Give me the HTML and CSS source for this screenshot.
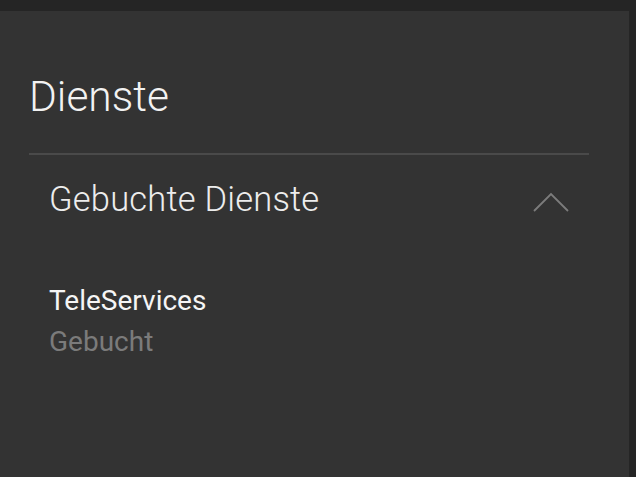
FILE: index.html
```html
<!DOCTYPE html>
<html lang="de">

<head>
    <meta charset="UTF-8">
    <meta name="viewport" content="width=device-width, initial-scale=1.0">
    <title>Dienste</title>
    <link rel="stylesheet" href="styles.css">
</head>

<body>
    <div class="panel">
        <h1 class="title">Dienste</h1>

        <div class="section">
            <div class="section-header">
                <span class="section-title">Gebuchte Dienste</span>
                <svg class="chevron" width="36" height="20" viewBox="0 0 36 20">
                    <polyline points="1,19 18,2 35,19" fill="none" stroke="#7c7c7c" stroke-width="1.8" />
                </svg>
            </div>

            <div class="service">
                <div class="service-name">TeleServices</div>
                <div class="service-status">Gebucht</div>
            </div>
        </div>
    </div>
</body>

</html>
```

FILE: styles.css
```css
html,
body {
    height: 100%;
}

body {
    margin: 0;
    padding: 11px 7px 0 0;
    box-sizing: border-box;
    background-color: #252525;
    font-family: 'Roboto', sans-serif;
}

.panel {
    height: 100%;
    background-color: #333333;
    padding: 0 40px 0 29px;
    box-sizing: border-box;
}

.title {
    margin: 0;
    padding-top: 62px;
    padding-bottom: 32px;
    font-weight: 300;
    font-size: 42.5px;
    line-height: 48px;
    color: #f2f2f2;
    border-bottom: 2px solid #4a4a4a;
}

.section {
    padding: 0 20px;
}

.section-header {
    display: flex;
    justify-content: space-between;
    align-items: center;
    height: 87px;
}

.section-title {
    font-weight: 300;
    font-size: 34.5px;
    letter-spacing: 0.2px;
    color: #ededed;
}

.chevron {
    display: block;
    margin-top: 7px;
}

.service {
    padding-top: 41px;
}

.service-name {
    font-size: 28px;
    line-height: 36px;
    color: #f5f5f5;
}

.service-status {
    font-size: 28px;
    line-height: 46px;
    color: #7b7b7b;
}
```
